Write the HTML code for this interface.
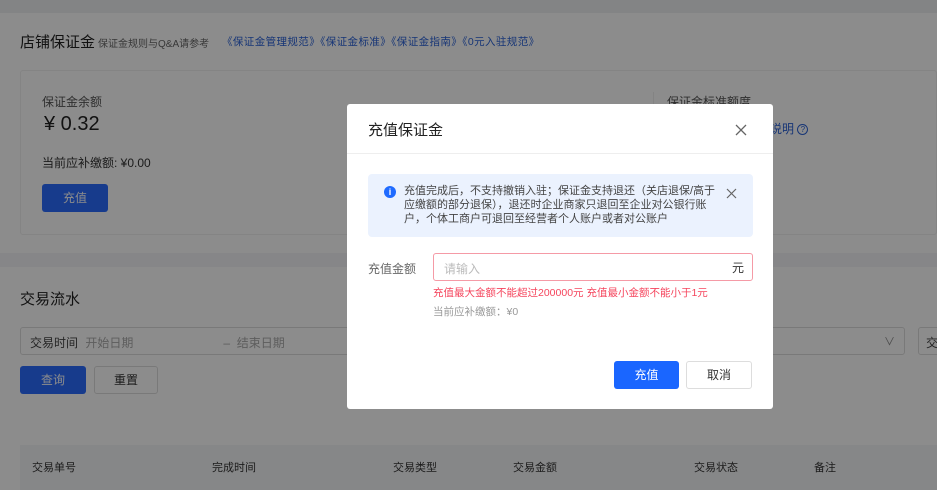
<!DOCTYPE html>
<html><head><meta charset="utf-8"><style>
*{margin:0;padding:0;box-sizing:border-box}
body{width:937px;height:490px;overflow:hidden;background:#f4f5f7;font-family:"Liberation Sans","Noto Sans CJK SC",sans-serif;position:relative;color:#333}
.a{position:absolute;white-space:nowrap}
.ov{position:absolute;left:0;top:0;width:937px;height:490px;background:rgba(0,0,0,.45)}
.blue{color:#2a62d8}
</style></head><body>
<div class="a" style="left:0;top:0;width:937px;height:13px;background:#eef0f3"></div>
<div class="a" style="left:0;top:13px;width:937px;height:240px;background:#fff"></div>
<div class="a" style="left:20px;top:31px;font-size:15px;color:#222">店铺保证金</div>
<div class="a" style="left:98px;top:35px;font-size:10px;color:#666">保证金规则与Q&amp;A请参考</div>
<div class="a blue" style="left:222px;top:34px;font-size:10.5px;letter-spacing:0.4px">《保证金管理规范》《保证金标准》《保证金指南》《0元入驻规范》</div>
<div class="a" style="left:20px;top:70px;width:917px;height:165px;border:1px solid #f0f0f0;border-radius:3px"></div>
<div class="a" style="left:42px;top:93px;font-size:12px;color:#555">保证金余额</div>
<div class="a" style="left:44px;top:113px;font-size:20px;color:#222">¥ 0.32</div>
<div class="a" style="left:42px;top:154px;font-size:12px;color:#333">当前应补缴额: ¥0.00</div>
<div class="a" style="left:42px;top:184px;width:66px;height:28px;background:#2a6cff;border-radius:3px;color:#fff;font-size:12px;text-align:center;line-height:28px">充值</div>
<div class="a" style="left:653px;top:92px;width:1px;height:40px;background:#eee"></div>
<div class="a" style="left:667px;top:93px;font-size:12px;color:#555">保证金标准额度</div>
<div class="a blue" style="left:770px;top:120px;font-size:12px">说明 <span style="display:inline-block;width:11px;height:11px;border:1px solid #2a62d8;border-radius:50%;font-size:8px;line-height:9px;text-align:center;vertical-align:1px">?</span></div>
<div class="a" style="left:0;top:267px;width:937px;height:223px;background:#fff"></div>
<div class="a" style="left:20px;top:288px;font-size:15px;color:#222">交易流水</div>
<div class="a" style="left:20px;top:327px;width:885px;height:28px;border:1px solid #ddd;border-radius:3px"></div>
<div class="a" style="left:918px;top:327px;width:30px;height:28px;border:1px solid #ddd;border-radius:3px"></div>
<div class="a" style="left:30px;top:334px;font-size:12px;color:#444">交易时间 <span style="color:#aaa;margin-left:4px">开始日期</span><span style="color:#aaa;margin-left:90px">–&nbsp; 结束日期</span></div>
<div class="a" style="left:884px;top:333px;font-size:11px;color:#888">∨</div>
<div class="a" style="left:926px;top:334px;font-size:12px;color:#444">交</div>
<div class="a" style="left:20px;top:366px;width:66px;height:28px;background:#2a6cff;border-radius:3px;color:#fff;font-size:12px;text-align:center;line-height:28px">查询</div>
<div class="a" style="left:94px;top:366px;width:64px;height:28px;border:1px solid #ddd;border-radius:3px;font-size:12px;text-align:center;line-height:26px">重置</div>
<div class="a" style="left:20px;top:445px;width:917px;height:45px;background:#f5f6f8"></div>
<div class="a" style="left:32px;top:459px;font-size:11px;color:#333">交易单号</div>
<div class="a" style="left:212px;top:459px;font-size:11px;color:#333">完成时间</div>
<div class="a" style="left:393px;top:459px;font-size:11px;color:#333">交易类型</div>
<div class="a" style="left:513px;top:459px;font-size:11px;color:#333">交易金额</div>
<div class="a" style="left:694px;top:459px;font-size:11px;color:#333">交易状态</div>
<div class="a" style="left:814px;top:459px;font-size:11px;color:#333">备注</div>
<div class="ov"></div>
<div class="a" style="left:347px;top:104px;width:426px;height:305px;background:#fff;border-radius:3px">
 <div class="a" style="left:21px;top:15px;font-size:15px;color:#222">充值保证金</div>
 <svg class="a" style="left:388px;top:20px" width="12" height="12"><path d="M1 1L11 11M11 1L1 11" stroke="#666" stroke-width="1.3"/></svg>
 <div class="a" style="left:0;top:49px;width:426px;height:1px;background:#eee"></div>
 <div class="a" style="left:21px;top:70px;width:385px;height:63px;background:#ebf2fe;border-radius:4px"></div>
 <div class="a" style="left:37px;top:82px;width:12px;height:12px;border-radius:50%;background:#1f6bff;color:#fff;font-size:9px;line-height:12px;text-align:center;font-weight:bold">i</div>
 <div class="a" style="left:57px;top:80px;font-size:11px;line-height:14px;color:#444;white-space:normal;width:312px">充值完成后，不支持撤销入驻；保证金支持退还（关店退保/高于应缴额的部分退保），退还时企业商家只退回至企业对公银行账户，个体工商户可退回至经营者个人账户或者对公账户</div>
 <svg class="a" style="left:379px;top:84px" width="11" height="11"><path d="M1 1L10 10M10 1L1 10" stroke="#666" stroke-width="1.2"/></svg>
 <div class="a" style="left:21px;top:156px;font-size:12px;color:#666">充值金额</div>
 <div class="a" style="left:86px;top:149px;width:320px;height:28px;border:1px solid #f59aa6;border-radius:3px"></div>
 <div class="a" style="left:97px;top:156px;font-size:12px;color:#bbb">请输入</div>
 <div class="a" style="left:385px;top:155px;font-size:12px;color:#333">元</div>
 <div class="a" style="left:86px;top:181px;font-size:10.5px;color:#f5455d">充值最大金额不能超过200000元 充值最小金额不能小于1元</div>
 <div class="a" style="left:86px;top:200px;font-size:10.5px;color:#999">当前应补缴额：¥0</div>
 <div class="a" style="left:267px;top:257px;width:65px;height:28px;background:#1a66ff;border-radius:3px;color:#fff;font-size:12px;text-align:center;line-height:28px">充值</div>
 <div class="a" style="left:339px;top:257px;width:66px;height:28px;border:1px solid #ddd;border-radius:3px;font-size:12px;text-align:center;line-height:26px;color:#333">取消</div>
</div>
</body></html>
